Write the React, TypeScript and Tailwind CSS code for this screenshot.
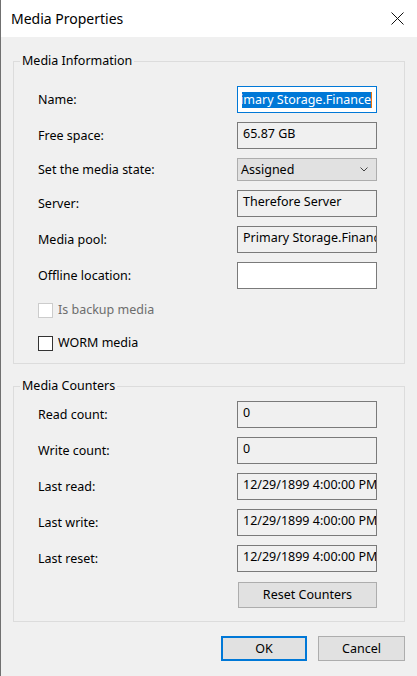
import React from 'react'

const font = { fontFamily: '"Noto Sans", "Open Sans", sans-serif' }

function ReadBox({ value, white }: { value?: string; white?: boolean }) {
  return (
    <div
      className={`w-[140px] h-[27px] border border-[#7a7a7a] pl-[5px] pr-[1px] pt-[3px] overflow-hidden whitespace-nowrap leading-[16px] ${
        white ? 'bg-white' : 'bg-[#f0f0f0]'
      }`}
    >
      {value}
    </div>
  )
}

function Row({ label, children }: { label: string; children: React.ReactNode }) {
  return (
    <div className="flex items-center justify-between">
      <span className="leading-[16px] pt-[1px]">{label}</span>
      {children}
    </div>
  )
}

function Check({ label, disabled }: { label: string; disabled?: boolean }) {
  return (
    <div className="flex items-center h-[16px]">
      <span
        className={`w-[15px] h-[15px] border bg-white ${disabled ? 'border-[#cccccc]' : 'border-[#333333]'}`}
      />
      <span className={`ml-[5px] leading-[16px] ${disabled ? 'text-[#6d6d6d]' : 'text-black'}`}>{label}</span>
    </div>
  )
}

export default function App() {
  return (
    <div className="w-[417px] h-[676px] bg-[#f0f0f0] flex text-[12.5px] text-black" style={font}>
      <div className="w-px bg-[#707070]" />
      <div className="flex-1 flex flex-col">
        <div className="h-[37px] bg-white flex items-center justify-between pl-[10px] pr-[13px]">
          <span className="text-[14px] leading-[20px]">Media Properties</span>
          <svg width="13" height="13" viewBox="0 0 13 13">
            <path d="M0.5 0.5 L12.5 12.5 M12.5 0.5 L0.5 12.5" stroke="#111" strokeWidth="1" fill="none" />
          </svg>
        </div>

        <div className="flex flex-col pl-[12px] pr-[12px]">
          <fieldset className="mt-[16px] border border-[#dcdcdc] pl-[24px] pr-[27px] pt-[17px] pb-[12px]">
            <legend className="ml-[-18px] px-[2px] leading-[16px]">Media Information</legend>
            <div className="flex flex-col gap-[9px]">
              <Row label="Name:">
                <div className="w-[140px] h-[27px] border border-[#0078d7] bg-white flex items-center">
                  <div className="ml-[4px] mr-[4px] flex-1 overflow-hidden flex justify-end items-center">
                    <span className="bg-[#0078d7] text-white whitespace-nowrap leading-[16px] shrink-0">
                      imary Storage.Finance
                    </span>
                    <span className="w-[1px] h-[16px] bg-[#e8730c] shrink-0" />
                  </div>
                </div>
              </Row>
              <Row label="Free space:">
                <ReadBox value="65.87 GB" />
              </Row>
              <Row label="Set the media state:">
                <div className="w-[140px] h-[23px] border border-[#adadad] bg-[#e1e1e1] flex items-center justify-between pl-[3px] pr-[8px]">
                  <span className="leading-[16px]">Assigned</span>
                  <svg width="8" height="5" viewBox="0 0 8 5">
                    <path d="M0.5 0.5 L4 4 L7.5 0.5" stroke="#444" strokeWidth="1" fill="none" />
                  </svg>
                </div>
              </Row>
              <Row label="Server:">
                <ReadBox value="Therefore Server" />
              </Row>
              <Row label="Media pool:">
                <ReadBox value="Primary Storage.Finance" />
              </Row>
              <Row label="Offline location:">
                <ReadBox white />
              </Row>
            </div>
            <div className="mt-[13px] flex flex-col gap-[17px]">
              <Check label="Is backup media" disabled />
              <Check label="WORM media" />
            </div>
          </fieldset>

          <fieldset className="mt-[14px] border border-[#dcdcdc] pl-[24px] pr-[27px] pt-[7px] pb-[13px]">
            <legend className="ml-[-18px] px-[2px] leading-[16px]">Media Counters</legend>
            <div className="flex flex-col gap-[9px]">
              <Row label="Read count:">
                <ReadBox value="0" />
              </Row>
              <Row label="Write count:">
                <ReadBox value="0" />
              </Row>
              <Row label="Last read:">
                <ReadBox value="12/29/1899 4:00:00 PM" />
              </Row>
              <Row label="Last write:">
                <ReadBox value="12/29/1899 4:00:00 PM" />
              </Row>
              <Row label="Last reset:">
                <ReadBox value="12/29/1899 4:00:00 PM" />
              </Row>
            </div>
            <div className="mt-[10px] flex justify-end">
              <button className="w-[139px] h-[26px] border border-[#adadad] bg-[#e1e1e1] leading-[16px]">
                Reset Counters
              </button>
            </div>
          </fieldset>

          <div className="mt-[14px] flex justify-end gap-[11px]">
            <button className="w-[86px] h-[25px] border-2 border-[#0078d7] bg-[#e1e1e1] leading-[16px]">OK</button>
            <button className="w-[87px] h-[25px] border border-[#adadad] bg-[#e1e1e1] leading-[16px]">Cancel</button>
          </div>
        </div>
      </div>
    </div>
  )
}
